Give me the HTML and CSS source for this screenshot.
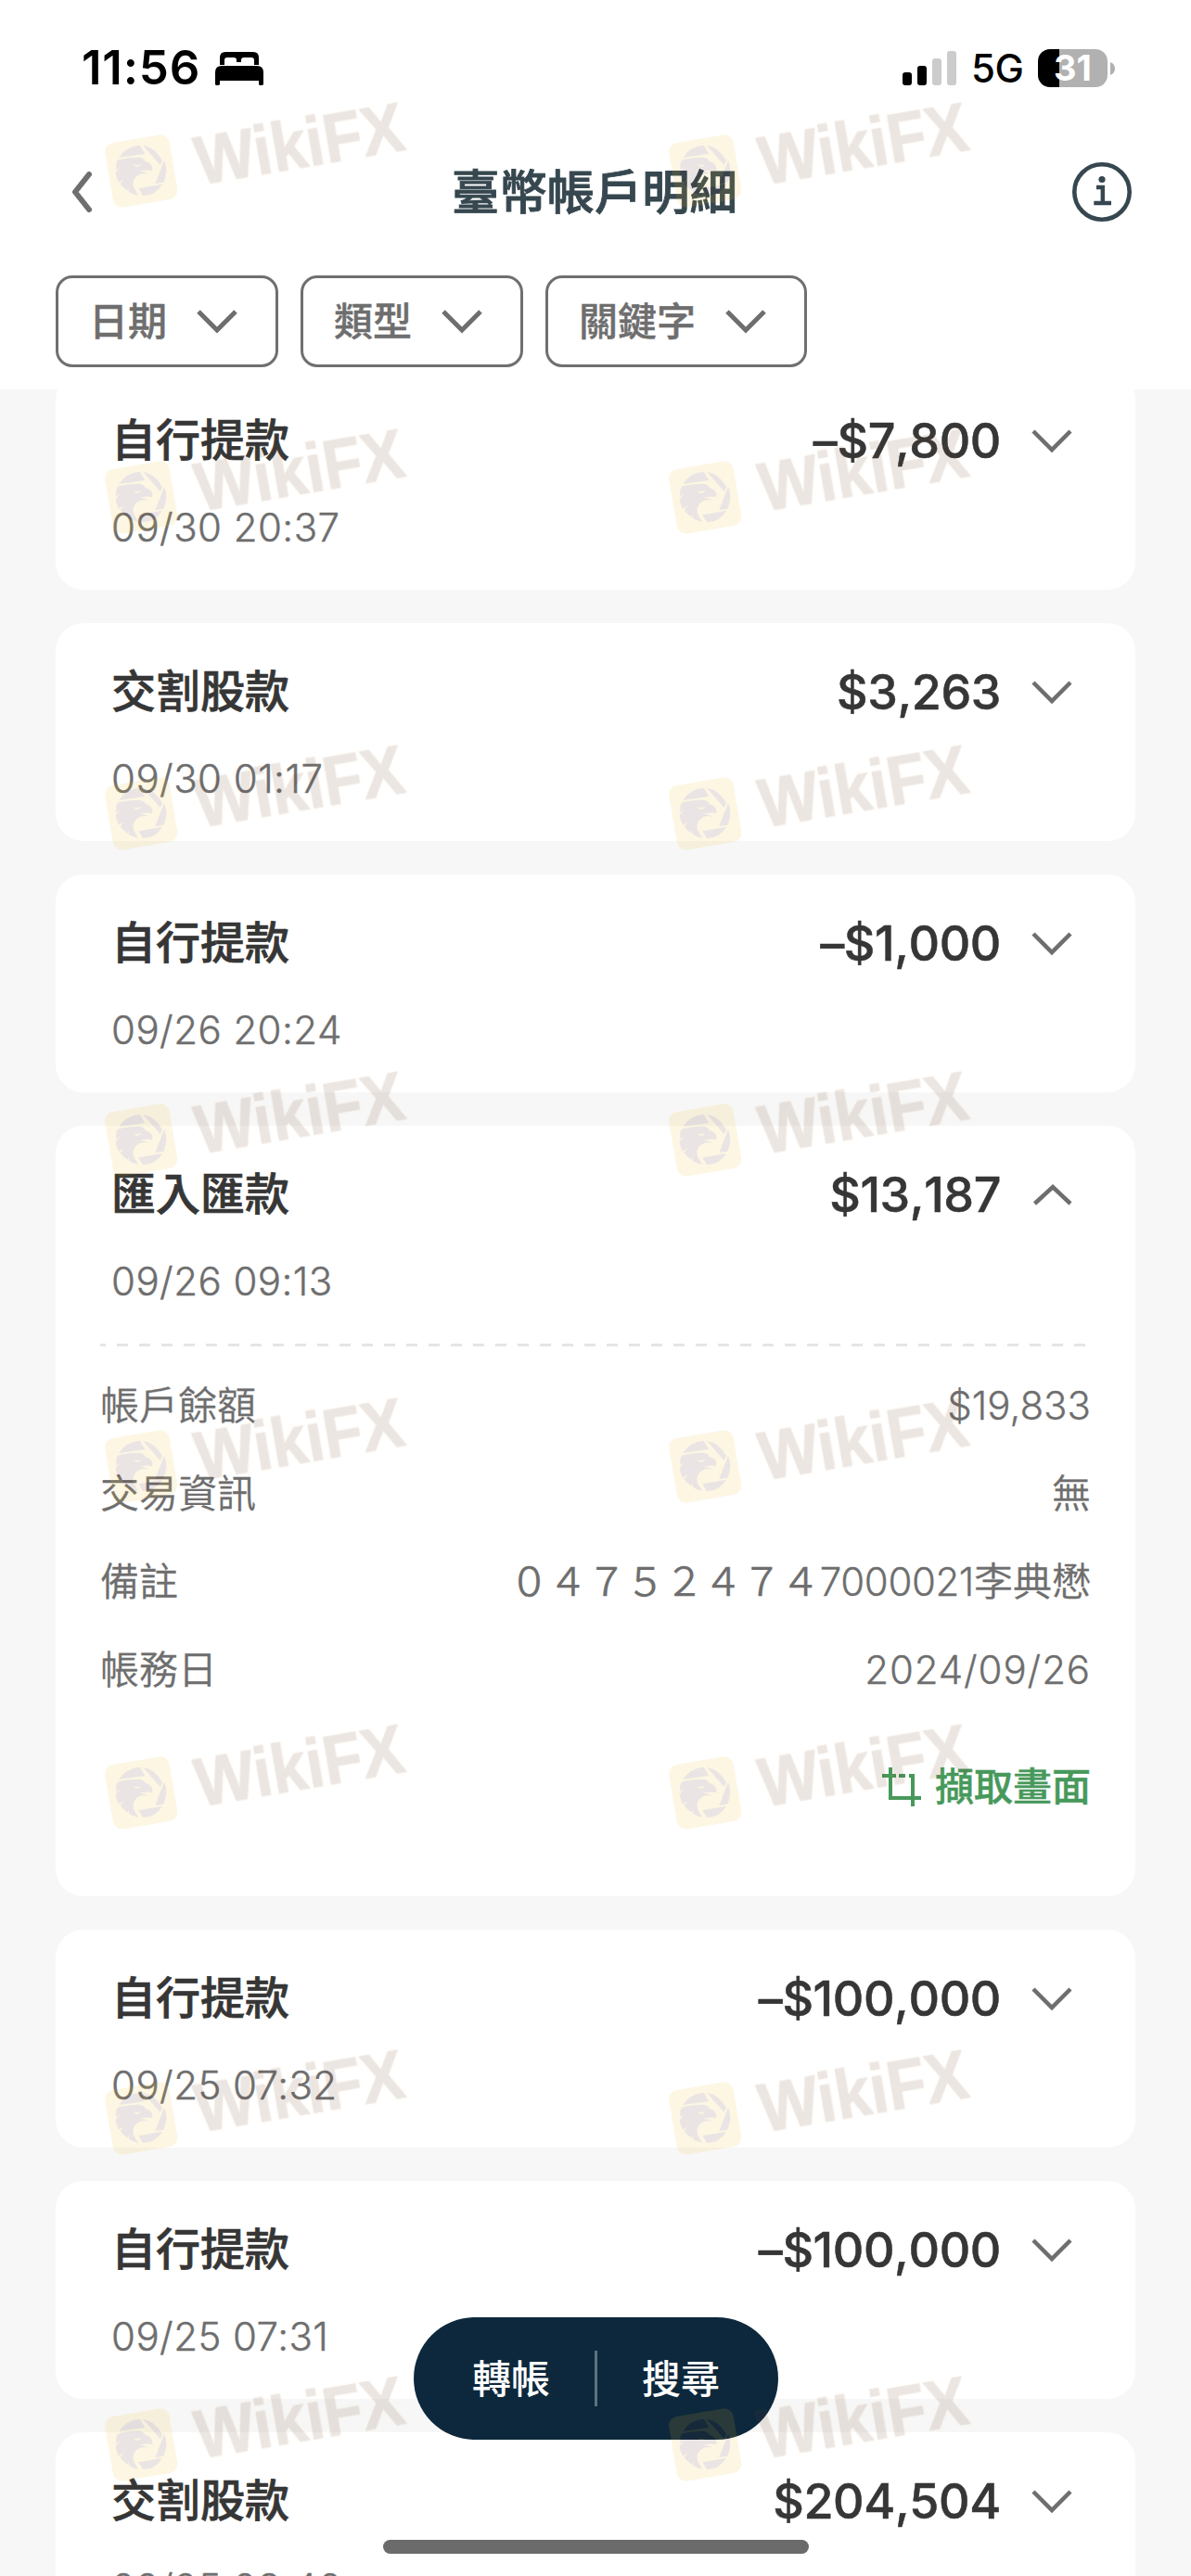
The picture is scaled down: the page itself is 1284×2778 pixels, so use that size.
FILE: index.html
```html
<!DOCTYPE html>
<html lang="zh-Hant">
<head>
<meta charset="utf-8">
<title>臺幣帳戶明細</title>
<link rel="stylesheet" href="styles.css">
</head>
<body>
<svg class="defs" width="0" height="0" aria-hidden="true">
  <symbol id="down" viewBox="0 0 44 26"><path d="M2 2 22 22 42 2" fill="none" stroke="currentColor"/></symbol>
  <symbol id="up" viewBox="0 0 44 26"><path d="M3.500 22 23 4 42 22" fill="none" stroke="currentColor"/></symbol>
</svg>

<div class="screen">
  <div class="top">
    <div class="status">
      <div class="status-left">
        <span class="time">11:56</span>
        <svg class="bed" width="52" height="36" viewBox="0 0 52 36"><path d="M5 14V6Q5 0 11 0H41Q47 0 47 6V14H42V9Q42 6 39 6H31Q28 6 28 9V11H23V9Q23 6 20 6H13Q10 6 10 9V14ZM0 35V22Q0 15 7 15H45Q52 15 52 22V35Q52 36 49 36 47 36 47 35V31H5V35Q5 36 2 36 0 36 0 35Z"/></svg>
      </div>
      <div class="status-right">
        <svg width="58" height="37" viewBox="0 0 58 37"><rect y="23" width="10" height="14" rx="3"/><rect x="16" y="16" width="10" height="21" rx="3"/><rect x="32" y="8" width="10" height="29" rx="3" fill="#ccc"/><rect x="48" width="10" height="37" rx="3" fill="#ccc"/></svg>
        <span class="network">5G</span>
        <span class="battery">31</span>
        <svg width="5" height="14" viewBox="0 0 5 14"><path d="M0 0Q5 2 5 7T0 14Z" fill="#b1b1b1"/></svg>
      </div>
    </div>
    <div class="nav">
      <svg width="22" height="44" viewBox="0 0 22 44"><path d="M19 3 4 22 19 41" fill="none" stroke="#6f6f6f" stroke-width="6" stroke-linecap="round" stroke-linejoin="round"/></svg>
      <h1>臺幣帳戶明細</h1>
      <svg width="64" height="64" viewBox="0 0 64 64"><circle cx="32" cy="32" r="29.700" fill="none" stroke="#36474f" stroke-width="4.600"/><circle cx="32" cy="18.500" r="3.600" fill="#36474f"/><path d="M26 27H32.800V43.500M23.300 44H42" fill="none" stroke="#36474f" stroke-width="4.400"/></svg>
    </div>
    <div class="filters">
      <div class="chip">日期<svg><use href="#down"/></svg></div>
      <div class="chip">類型<svg><use href="#down"/></svg></div>
      <div class="chip">關鍵字<svg><use href="#down"/></svg></div>
    </div>
  </div>

  <div class="list">
    <div class="card first"><div class="row"><b>自行提款</b><span class="amount">–$7,800</span><svg><use href="#down"/></svg></div><div class="date">09/30 20:37</div></div>
    <div class="card"><div class="row"><b>交割股款</b><span class="amount">$3,263</span><svg><use href="#down"/></svg></div><div class="date">09/30 01:17</div></div>
    <div class="card"><div class="row"><b>自行提款</b><span class="amount">–$1,000</span><svg><use href="#down"/></svg></div><div class="date">09/26 20:24</div></div>
    <div class="card open">
      <div class="row"><b>匯入匯款</b><span class="amount">$13,187</span><svg><use href="#up"/></svg></div>
      <div class="date">09/26 09:13</div>
      <div class="dash"></div>
      <div class="detail"><span>帳戶餘額</span><span>$19,833</span></div>
      <div class="detail"><span>交易資訊</span><span>無</span></div>
      <div class="detail"><span>備註</span><span><span class="wide">０４７５２４７４</span><span class="tight">7000021</span>李典懋</span></div>
      <div class="detail"><span>帳務日</span><span class="loose">2024/09/26</span></div>
      <div class="capture"><svg width="42" height="42" viewBox="0 0 42 42"><path d="M9 0V33H42M0 9H15M18 9H25M29 9H33V42" fill="none" stroke="#47995b" stroke-width="4"/></svg><span>擷取畫面</span></div>
    </div>
    <div class="card"><div class="row"><b>自行提款</b><span class="amount">–$100,000</span><svg><use href="#down"/></svg></div><div class="date">09/25 07:32</div></div>
    <div class="card"><div class="row"><b>自行提款</b><span class="amount">–$100,000</span><svg><use href="#down"/></svg></div><div class="date">09/25 07:31</div></div>
    <div class="card"><div class="row"><b>交割股款</b><span class="amount">$204,504</span><svg><use href="#down"/></svg></div><div class="date">09/25 03:46</div></div>
  </div>

  <div class="pill"><span>轉帳</span><i></i><span>搜尋</span></div>
  <div class="home"></div>

  <svg class="marks" width="1284" height="2778" viewBox="0 0 1284 2778">
    <g id="column">
      <g id="mark" opacity=".12">
        <rect x="117" y="149.200" width="70.500" height="70.500" rx="10" fill="#eebc26" transform="rotate(-9.600 152.250 184.500)"/>
        <g transform="translate(104 134) scale(.33333)">
          <path fill="#5a302e" d="M73 108Q95 72 140 68L157 96ZM150 68Q192 76 213 118L206 132ZM219 117Q234 150 217 188L190 192ZM136 208 213 194Q190 232 150 231ZM64 140Q62 116 75 114 110 106 140 107 155 110 158 120 178 125 181 140L180 151Q168 146 140 152 160 154 168 161 145 155 130 168 112 185 122 208L135 230Q115 226 105 218L103 205 101 215Q85 205 77 193L88 178 72 188Q63 170 62 157L75 140 63 148Z"/>
          <path fill="#eebc26" d="M118 130Q130 134 144 129 140 139 128 137Z"/>
        </g>
        <text class="mark-text" textLength="227" lengthAdjust="spacingAndGlyphs" transform="translate(215 199.500) rotate(-9.700)">WikiFX</text>
      </g>
      <use href="#mark" y="352"/>
      <use href="#mark" y="693"/>
      <use href="#mark" y="1045"/>
      <use href="#mark" y="1397"/>
      <use href="#mark" y="1749"/>
      <use href="#mark" y="2100"/>
      <use href="#mark" y="2452"/>
    </g>
    <use href="#column" x="608"/>
  </svg>
</div>
</body>
</html>
```
FILE: styles.css
```css
* { box-sizing: border-box; }
body { margin: 0; background: #f7f7f7; }
.defs { position: absolute; }
.screen {
  position: relative;
  width: 1284px;
  height: 2778px;
  overflow: hidden;
  background: #f7f7f7;
  font-family: Inter, "Noto Sans CJK TC", sans-serif;
  color: #363636;
}
svg { flex: none; display: block; }
.top { height: 420px; background: #fff; }
.status { height: 147px; padding: 0 82px 0 88px; display: flex; justify-content: space-between; align-items: center; color: #000; }
.status-left, .status-right { display: flex; align-items: center; }
.time { width: 144px; margin-bottom: 2px; font-size: 51px; font-weight: 600; line-height: 60px; letter-spacing: .8px; }
.network { width: 55px; margin: 1px 17px 0 16px; font-size: 42px; font-weight: 450; line-height: 50px; letter-spacing: -.5px; }
.battery { width: 75px; height: 41px; margin-right: 3px; border-radius: 13px; background: linear-gradient(90deg, #000 23px, #b1b1b1 23px); color: #fff; font-size: 38px; font-weight: 700; line-height: 41px; text-align: center; }
.nav { height: 120px; padding: 0 64px 0 77px; display: flex; justify-content: space-between; align-items: center; }
h1 { margin: 0 0 0 27px; font-size: 51.3px; line-height: 70px; font-weight: 500; color: #36474f; -webkit-text-stroke: .9px #36474f; }
.filters { display: flex; gap: 24px; padding: 30px 60px 0; }
.chip { height: 99px; padding: 0 41px 0 33px; display: flex; align-items: center; gap: 32px; border: 3px solid #6f6f6f; border-radius: 18px; color: #6e6e6e; font-size: 42px; font-weight: 500; line-height: 60px; -webkit-text-stroke: .4px #6e6e6e; }
.chip svg, .row svg { width: 44px; height: 26px; color: #6e6e6e; stroke-width: 5; }
.row svg { stroke-width: 4.5; margin: 1px 0 0 34px; }
.list { height: 2358px; overflow: hidden; padding: 0 60px; display: flex; flex-direction: column; gap: 36px; }
.card { flex: none; height: 235px; padding: 37px 68px 0 60px; background: #fff; border-radius: 30px; }
.first { margin-top: -19px; }
.open { height: 831px; }
.row { height: 74px; display: flex; align-items: center; }
.row b { flex: 1; font-size: 48px; font-weight: 500; line-height: 70px; -webkit-text-stroke: .7px #363636; }
.amount { margin: 2px -1px 0 0; font-size: 52px; font-weight: 550; line-height: 70px; font-kerning: none; letter-spacing: -.4px; -webkit-text-stroke: .5px #363636; }
.date { margin-top: 27px; color: #6e6e6e; font-size: 42px; font-weight: 300; line-height: 60px; letter-spacing: .45px; -webkit-text-stroke: .4px #6e6e6e; }
.dash { height: 3px; margin: 37px -20px 0 -12px; background: repeating-linear-gradient(90deg, #e5e5e5 0 6px, #fff 6px 18px, #e5e5e5 18px 24px); }
.detail { height: 95px; margin: 0 -20px 0 -12px; display: flex; justify-content: space-between; align-items: center; color: #6e6e6e; font-size: 42px; font-weight: 350; line-height: 60px; -webkit-text-stroke: .3px #6e6e6e; }
.dash + .detail { margin-top: 16px; }
.tight { letter-spacing: -.4px; }
.loose { letter-spacing: .9px; }
.wide { letter-spacing: -.2px; }
.capture { margin: 49px -20px 0 0; display: flex; justify-content: flex-end; align-items: center; gap: 15px; color: #47995b; font-size: 42px; font-weight: 500; line-height: 60px; -webkit-text-stroke: .4px #47995b; }
.pill { position: absolute; left: 446px; top: 2499px; width: 393px; height: 132px; border-radius: 66px; background: #0d283c; color: #fff; display: flex; align-items: center; justify-content: center; gap: 48px; font-size: 42px; font-weight: 500; line-height: 60px; }
.pill span { padding-top: 2px; }
.pill i { width: 3px; height: 60px; background: #5d7480; }
.home { position: absolute; left: 413px; top: 2739px; width: 459px; height: 15px; border-radius: 8px; background: #6b6b6b; }
.marks { position: absolute; left: 0; top: 0; pointer-events: none; }
.mark-text { font: 700 74px "Liberation Sans", sans-serif; fill: #693726; stroke: #693726; stroke-width: 1px; stroke-linejoin: round; filter: drop-shadow(0 0 1px #eebc26); }
```
